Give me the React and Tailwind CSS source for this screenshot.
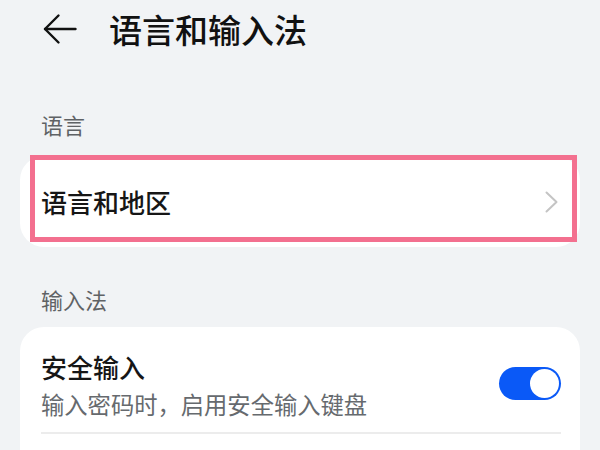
export default function App() {
  return (
    <div
      className="w-[600px] h-[450px] overflow-hidden bg-[#f1f3f5] text-black"
      style={{ fontFamily: '"Noto Sans CJK SC", "Noto Sans", sans-serif' }}
    >
      {/* Header */}
      <div className="h-[58px] flex items-center pl-[43px] gap-[32px]">
        <svg width="34" height="32" viewBox="0 0 34 32" fill="none" stroke="#111" strokeWidth="2.4" strokeLinecap="round" strokeLinejoin="round">
          <path d="M32.5 16H2" />
          <path d="M15.5 2.5L2 16l13.5 13.5" />
        </svg>
        <div className="text-[33px] leading-none font-medium text-[#111]">语言和输入法</div>
      </div>

      {/* Section: 语言 */}
      <div className="mt-[55px] h-[22px] pl-[41px] text-[22px] leading-none text-[#5f6265]">语言</div>

      <div className="relative mt-[21px] mx-[20px] h-[91px] rounded-[24px] bg-white flex items-center justify-between pl-[21px] pr-[22px]">
        <div className="text-[26px] leading-none font-medium text-[#161616]">语言和地区</div>
        <svg width="13" height="22" viewBox="0 0 13 22" fill="none" stroke="#c4c4c4" strokeWidth="2" strokeLinecap="round" strokeLinejoin="round">
          <path d="M1.5 1.5L11.5 11L1.5 20.5" />
        </svg>
        <div className="absolute left-[10px] top-[-1px] right-[3px] bottom-[5px] border-[5px] border-[#f3708f]" />
      </div>

      {/* Section: 输入法 */}
      <div className="mt-[41px] h-[22px] pl-[41px] text-[22px] leading-none text-[#5f6265]">输入法</div>

      <div className="mt-[17px] mx-[20px] h-[200px] rounded-t-[24px] bg-white pl-[21px] pr-[19px]">
        <div className="flex items-center justify-between pt-[27px]">
          <div>
            <div className="text-[26px] leading-none font-medium text-[#161616]">安全输入</div>
            <div className="mt-[13px] text-[23.3px] leading-none text-[#666a6e]">输入密码时，启用安全输入键盘</div>
          </div>
          <div className="w-[62px] h-[33px] rounded-full bg-[#0a59f7] flex items-center justify-end pr-[2px] -mt-[4px]">
            <div className="w-[29px] h-[29px] rounded-full bg-white" />
          </div>
        </div>
        <div className="mt-[16px] h-[2px] bg-[#ececec]" />
      </div>
    </div>
  );
}
